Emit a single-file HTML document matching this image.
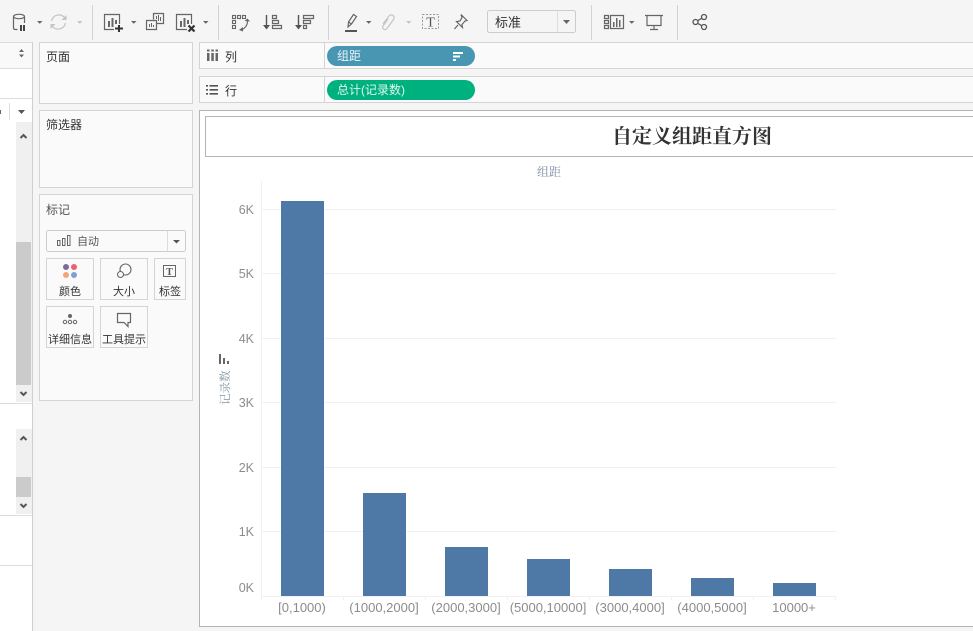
<!DOCTYPE html>
<html lang="zh"><head><meta charset="utf-8"><title>自定义组距直方图</title>
<style>
html,body{margin:0;padding:0;background:#f5f5f5}
body{width:973px;height:631px;overflow:hidden;position:relative}
svg{position:absolute;left:0;top:0;display:block}
text{font-family:"Liberation Sans","Noto Sans CJK SC",sans-serif;font-size:12px;fill:#333}
.s{font-family:"Noto Sans CJK SC",sans-serif}
.m{font-size:11px;fill:#333;text-anchor:middle;font-family:"Noto Sans CJK SC",sans-serif}
.y{fill:#8c8c8c;text-anchor:end;font-size:12.500px}
.x{fill:#8c8c8c;text-anchor:middle;font-size:13px}
.ic{fill:none;stroke:#666;stroke-width:1.200}
.gr{fill:none;stroke:#c4c4c4;stroke-width:1.200}
.sep{stroke:#d2d2d2;stroke-width:1}
.l{stroke:#dcdcdc;stroke-width:1}
.p{fill:#fafafa;stroke:#d4d4d4;stroke-width:1}
.g{stroke:#f1f1f1;stroke-width:1}
.b{fill:#4e79a7}
.mb{fill:#fafafa;stroke:#d4d4d4;stroke-width:1}
</style></head><body>
<svg width="973" height="631" viewBox="0 0 973 631" xmlns="http://www.w3.org/2000/svg">
<rect width="973" height="631" fill="#f5f5f5"/>

<!-- left pane -->
<rect x="0" y="42" width="32" height="589" fill="#fff"/>
<rect x="0" y="43" width="32" height="25" fill="#f9f9f9"/>
<path class="l" d="M0 42.500H33M0 68.500H32M0 98.500H32M0 403.500H32M0 515.500H32M0 565.500H32"/>
<path d="M32.500 42V631" stroke="#cfcfcf"/>
<path d="M19 52l2.500-3 2.500 3zM19 54.500l2.500 3 2.500-3z" fill="#666"/>
<path d="M9.500 103V120" stroke="#ddd"/>
<path d="M18 110h7l-3.500 4z" fill="#555"/>
<rect x="0" y="110" width="1" height="4" fill="#666"/>
<rect x="16" y="122" width="16" height="280" fill="#f0f0f0"/>
<rect x="16" y="242" width="15" height="143" fill="#cbcbcb"/>
<path d="M20.500 138l3-3 3 3M20.500 392l3 3 3-3" fill="none" stroke="#555" stroke-width="2"/>
<rect x="16" y="429" width="16" height="85" fill="#f0f0f0"/>
<rect x="16" y="477" width="15" height="20" fill="#cbcbcb"/>
<path d="M20.500 440l3-3 3 3M20.500 504l3 3 3-3" fill="none" stroke="#555" stroke-width="2"/>

<!-- toolbar icons -->
<g class="ic">
<ellipse cx="19" cy="16.500" rx="5.500" ry="2.200"/>
<path d="M13.500 16.500V28q0 1.500 2 1.500h2M24.500 16.500V23"/>
</g>
<path d="M20 25h2v6h-2zM23 25h2v6h-2z" fill="#444"/>
<path d="M37 21h5.500l-2.750 2.800zM131 21h5.500l-2.750 2.800zM203 21h5.500l-2.750 2.800zM366 21h5.500l-2.750 2.800zM629 21h5.500l-2.750 2.800z" fill="#666"/>
<path d="M77 21h5.500l-2.750 2.800zM406 21h5.500l-2.750 2.800z" fill="#c4c4c4"/>
<path class="gr" d="M51.500 21a7.500 7.500 0 0 1 13-3.500M65.500 23a7.500 7.500 0 0 1-13 3.500" stroke-width="1.500"/>
<path d="M66.500 15v5h-5zM50.500 29v-5h5z" fill="#c4c4c4"/>
<path class="sep" d="M92.500 5V40M218.500 5V40M328.500 5V40M591.500 5V40M677.500 5V40"/>

<!-- new worksheet -->
<path class="ic" d="M114 29.500H104.500V14.500H119.500V24"/>
<path d="M108 21h2v6h-2zM111.500 18h2v9h-2zM115 20h2v4h-2z" fill="#666"/>
<path d="M118 25h2v2.500h3v2h-3v2.500h-2v-2.500h-3v-2h3z" fill="#333"/>
<!-- duplicate -->
<path class="ic" d="M153.500 19.500V13.500H163.500V23.500H156.500M146.500 20.500H156.500V29.500H146.500z"/>
<path d="M156 19h1v-3h-1zM158 21h1v-6h-1zM160 21h1v-4h-1zM149 27h1v-3h-1zM151 27h1v-4h-1zM153 27h1v-2h-1z" fill="#666"/>
<!-- clear -->
<path class="ic" d="M187 29.500H176.500V14.500H191.500V24"/>
<path d="M180 21h2v6h-2zM183.500 18h2v9h-2zM187 20h2v4h-2z" fill="#666"/>
<path d="M188.500 25.500l6 6M194.500 25.500l-6 6" stroke="#333" stroke-width="2.200"/>
<!-- swap -->
<g fill="none" stroke="#666" stroke-width="1.100">
<rect x="232.500" y="15.500" width="3" height="3"/><rect x="237.500" y="15.500" width="3" height="3"/><rect x="242.500" y="15.500" width="3" height="3"/>
<rect x="232.500" y="20.500" width="3" height="3"/><rect x="232.500" y="25.500" width="3" height="3"/>
<path d="M247.500 21q0 6-6 9"/>
</g>
<path d="M244.500 21l3 -2.500 2.500 3zM239 30l4-3v4.500z" fill="#666"/>
<!-- sort -->
<path d="M266.500 15V27" stroke="#555" stroke-width="1.400"/><path d="M263 25h7l-3.500 4.500z" fill="#555"/>
<path class="ic" d="M272.500 15.500h4v3h-4zM272.500 20.500h6v3h-6zM272.500 25.500h9v3h-9z"/>
<path d="M298.500 15V27" stroke="#555" stroke-width="1.400"/><path d="M295 25h7l-3.500 4.500z" fill="#555"/>
<path class="ic" d="M303.500 15.500h10v3h-10zM303.500 20.500h7v3h-7zM303.500 25.500h3v3h-3z"/>
<!-- pen -->
<path class="ic" d="M348 27l.5-5 5-7.500 3 2-5 7.500zM348.500 22l3 2"/>
<path d="M345 31h12" stroke="#555" stroke-width="2"/>
<!-- clip -->
<path class="gr" d="M383 24l6-8q2-2 4-.5t.5 4l-6.500 9q-2 2-3.500.5t-.5-3l5-7"/>
<!-- T -->
<rect x="422.500" y="14.500" width="16" height="14" fill="none" stroke="#999" stroke-dasharray="2 1.500"/>
<text x="430.500" y="26.500" text-anchor="middle" style="font-family:'Liberation Serif',serif;font-size:14px;fill:#555">T</text>
<!-- pin -->
<path class="ic" d="M461 14.500l6 6-2 .5-3 3.500 .5 3-6-6 3.500-.5 2-3.500zM458 25l-3.500 4"/>
<!-- select -->
<rect x="487.500" y="10.500" width="88" height="22" rx="2" fill="#f5f5f5" stroke="#ccc"/>
<path d="M557.500 11V32" stroke="#ddd"/>
<path d="M563 20h7l-3.500 4z" fill="#666"/>
<text x="495" y="27" class="s" style="font-size:13px">标准</text>
<!-- show me -->
<path class="ic" d="M604.500 15.500h4v3h-4zM604.500 20.500h4v3h-4zM604.500 25.500h4v3h-4zM610.500 15.500h13v13h-13z"/>
<path d="M613 22h1.500v5H613zM616 18h1.500v9H616zM619 20h1.500v7H619z" fill="#666"/>
<!-- presentation -->
<path class="ic" d="M645 15.500h18M647 15.500v10h14v-10M654 25.500v4M650 29.500h8"/>
<!-- share -->
<g fill="none" stroke="#555" stroke-width="1.300"><circle cx="695.500" cy="22" r="2.500"/><circle cx="704" cy="17" r="2.500"/><circle cx="704" cy="27" r="2.500"/><path d="M698 20.500l3.700-2.200M698 23.500l3.700 2.200"/></g>

<!-- panels -->
<rect class="p" x="39.500" y="42.500" width="153" height="61"/>
<text x="46" y="61">页面</text>
<rect class="p" x="39.500" y="110.500" width="153" height="77"/>
<text x="46" y="129">筛选器</text>
<rect class="p" x="39.500" y="194.500" width="153" height="206"/>
<text x="46" y="214" style="fill:#555">标记</text>
<rect x="46.500" y="230.500" width="139" height="21" rx="2" fill="#fafafa" stroke="#ccc"/>
<path d="M167.500 231V251" stroke="#ddd"/>
<path d="M173 240h7l-3.500 3.500z" fill="#555"/>
<path d="M57.500 240.500h2.500v5h-2.500zM62.500 238.500h2.500v7h-2.500zM67.500 235.500h2.500v10h-2.500z" fill="none" stroke="#666"/>
<text x="77" y="245" class="s" style="font-size:11px;fill:#555">自动</text>
<!-- mark buttons -->
<rect class="mb" x="46.500" y="258.500" width="47" height="41"/>
<rect class="mb" x="100.500" y="258.500" width="47" height="41"/>
<rect class="mb" x="154.500" y="258.500" width="31" height="41"/>
<rect class="mb" x="46.500" y="306.500" width="47" height="41"/>
<rect class="mb" x="100.500" y="306.500" width="47" height="41"/>
<circle cx="66" cy="267" r="3" fill="#7f6a9c"/><circle cx="74" cy="267" r="3" fill="#f0616d"/>
<circle cx="66" cy="275" r="3" fill="#f1a67a"/><circle cx="74" cy="275" r="3" fill="#7ba3cc"/>
<g fill="none" stroke="#666" stroke-width="1.100"><circle cx="125.500" cy="269.500" r="5.500"/><circle cx="120.500" cy="274.500" r="3" fill="#fafafa"/></g>
<rect x="163.500" y="265.500" width="12" height="11" fill="none" stroke="#666"/>
<text x="169.500" y="275" text-anchor="middle" style="font-family:'Liberation Serif',serif;font-size:10px;font-weight:700;fill:#555">T</text>
<circle cx="70" cy="316" r="2" fill="#666"/>
<g fill="none" stroke="#666"><circle cx="65" cy="322" r="1.700"/><circle cx="70" cy="322" r="1.700"/><circle cx="75" cy="322" r="1.700"/></g>
<path class="ic" d="M117.500 313.500h13v9h-2.500v4l-4-4h-6.500z"/>
<text class="m" x="70" y="295">颜色</text>
<text class="m" x="124" y="295">大小</text>
<text class="m" x="170" y="295">标签</text>
<text class="m" x="70" y="343">详细信息</text>
<text class="m" x="124" y="343">工具提示</text>

<!-- shelves -->
<rect x="199.500" y="42.500" width="780" height="26" fill="#fafafa" stroke="#d4d4d4"/>
<rect x="199.500" y="76.500" width="780" height="26" fill="#fafafa" stroke="#d4d4d4"/>
<path d="M324.500 42V69M324.500 76V103" stroke="#d4d4d4"/>
<path d="M207 53h2.500v8H207zM211.300 53h2.500v8h-2.500zM215.500 53h2.500v8h-2.500z" fill="#666"/>
<path d="M207 49.500h2.500v2H207zM211.300 49.500h2.500v2h-2.500zM215.500 49.500h2.500v2h-2.500z" fill="#666"/>
<text x="225" y="61">列</text>
<path d="M206 85h2v1.600h-2zM206 89h2v1.600h-2zM206 93h2v1.600h-2zM209.500 85h8.500v1.600h-8.500zM209.500 89h8.500v1.600h-8.500zM209.500 93h8.500v1.600h-8.500z" fill="#555"/>
<text x="225" y="95">行</text>
<rect x="327" y="46" width="148" height="20" rx="10" fill="#4996b2"/>
<text x="337" y="60" style="fill:#e8f4f8">组距</text>
<path d="M453 52h10v2h-10zM453 55.500h7v2h-7zM453 59h3v2h-3z" fill="#fff"/>
<rect x="327" y="80" width="148" height="20" rx="10" fill="#00b180"/>
<text x="337" y="94" style="fill:#dff6ee">总计(记录数)</text>

<!-- view -->
<rect x="199.500" y="110.500" width="780" height="516" fill="#fff" stroke="#b4b4b4"/>
<rect x="205.500" y="116.500" width="780" height="40" fill="#fff" stroke="#b4b4b4"/>
<text x="612" y="143" style="font-family:'Noto Serif CJK SC',serif;font-size:20px;font-weight:700;fill:#333">自定义组距直方图</text>
<text x="537" y="176" style="font-family:'Noto Serif CJK SC',serif;font-size:12px;fill:#7f8da6">组距</text>

<!-- chart -->
<path class="g" d="M261 209.500H836M261 273.500H836M261 338.500H836M261 402.500H836M261 467.500H836M261 531.500H836M261 596.500H836"/>
<path class="g" d="M261.500 181V600M343.500 596V600M425.500 596V600M507.500 596V600M589.500 596V600M671.500 596V600M753.500 596V600M835.500 596V600"/>
<rect class="b" x="281" y="201" width="43" height="395"/>
<rect class="b" x="363" y="493" width="43" height="103"/>
<rect class="b" x="445" y="547" width="43" height="49"/>
<rect class="b" x="527" y="559" width="43" height="37"/>
<rect class="b" x="609" y="569" width="43" height="27"/>
<rect class="b" x="691" y="578" width="43" height="18"/>
<rect class="b" x="773" y="583" width="43" height="13"/>
<text class="y" x="254" y="214">6K</text>
<text class="y" x="254" y="278">5K</text>
<text class="y" x="254" y="343">4K</text>
<text class="y" x="254" y="407">3K</text>
<text class="y" x="254" y="472">2K</text>
<text class="y" x="254" y="536">1K</text>
<text class="y" x="254" y="592">0K</text>
<text class="x" x="302" y="612">[0,1000)</text>
<text class="x" x="384" y="612">(1000,2000]</text>
<text class="x" x="466" y="612">(2000,3000]</text>
<text class="x" x="548" y="612">(5000,10000]</text>
<text class="x" x="630" y="612">(3000,4000]</text>
<text class="x" x="712" y="612">(4000,5000]</text>
<text class="x" x="794" y="612">10000+</text>
<path d="M219 354h2v10h-2zM223 358h2v6h-2zM227 361h2v3h-2z" fill="#666"/>
<text transform="translate(229 405) rotate(-90)" x="0" y="0" style="font-family:'Noto Serif CJK SC',serif;font-size:11.500px;fill:#7f97a6">记录数</text>
</svg>
</body></html>
